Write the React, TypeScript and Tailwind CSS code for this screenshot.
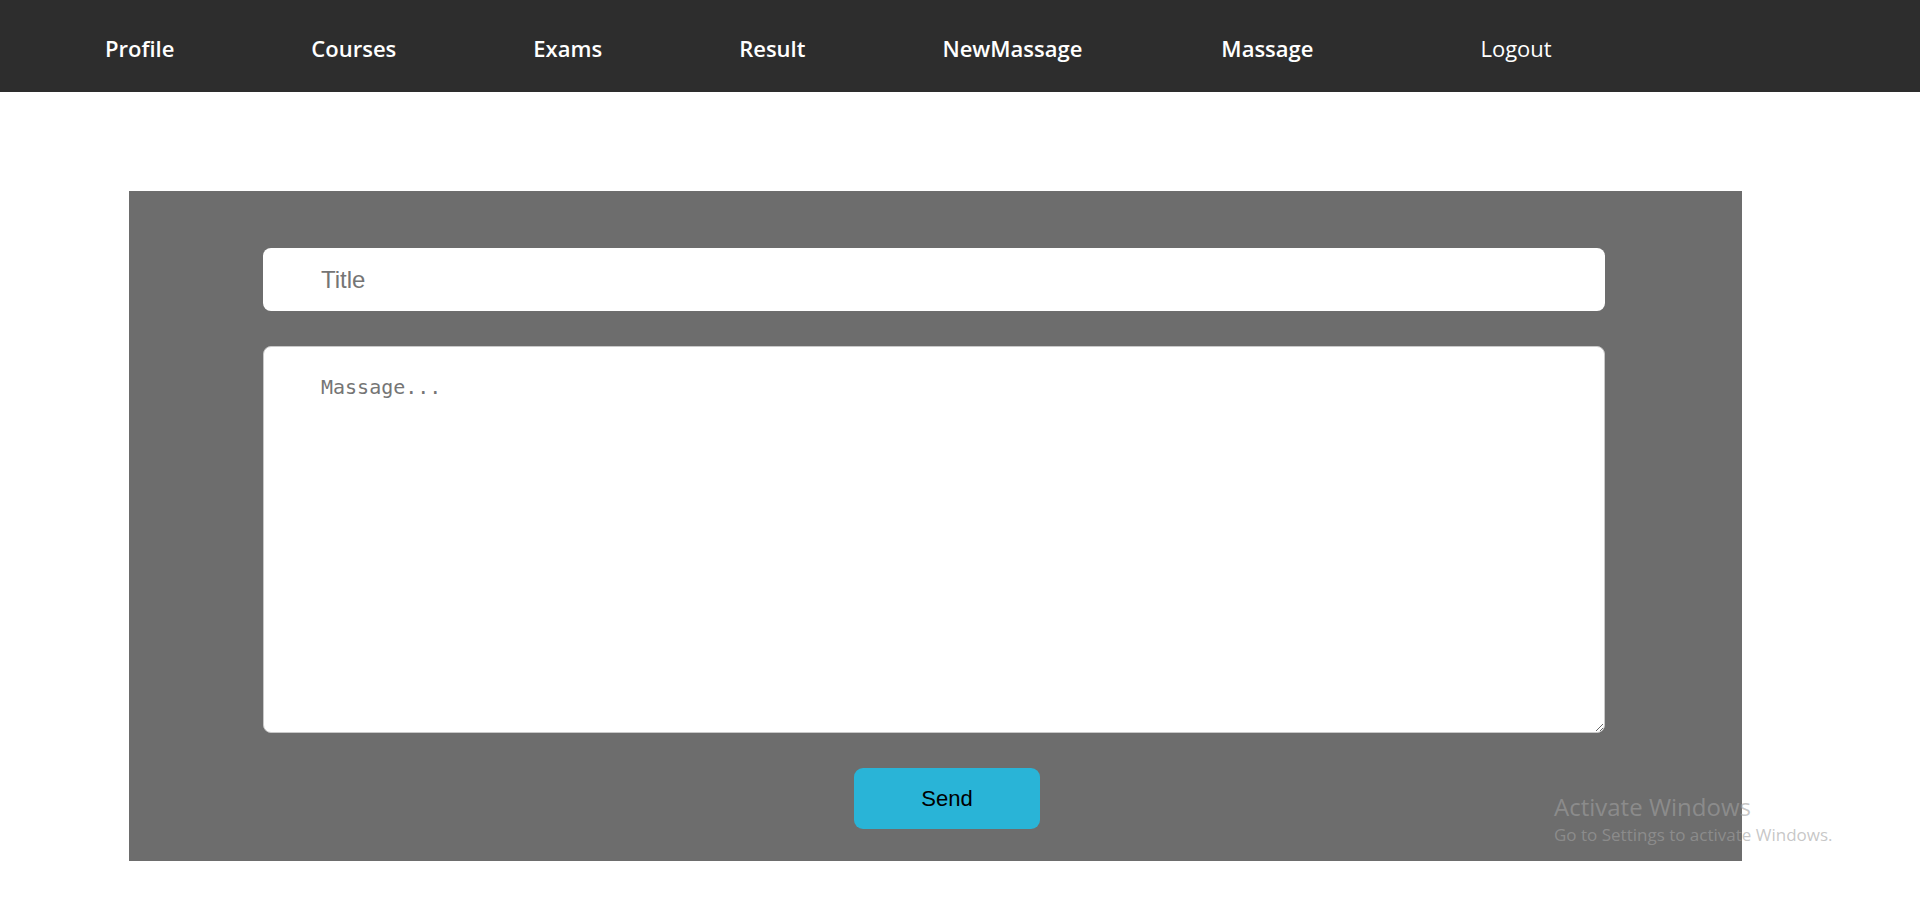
import React from 'react';

const navLinks = [
  { id: 'profile', label: 'Profile' },
  { id: 'courses', label: 'Courses' },
  { id: 'exams', label: 'Exams' },
  { id: 'result', label: 'Result' },
  { id: 'new-massage', label: 'NewMassage' },
  { id: 'massage', label: 'Massage' },
];

const Navbar = () => (
  <nav className="h-[92px] bg-[#2d2d2d] flex items-center pt-[5px] pl-[105px] font-['Open_Sans','Noto_Sans',sans-serif] text-[22px] text-white">
    <ul className="flex items-center gap-[137px]">
      {navLinks.map((link) => (
        <li key={link.id} className={link.id === 'massage' ? 'ml-[2px] font-semibold' : 'font-semibold'}>
          <a href="#">{link.label}</a>
        </li>
      ))}
      <li className="ml-[30px] font-normal">
        <button type="button">Logout</button>
      </li>
    </ul>
  </nav>
);

export default function App() {
  return (
    <div className="relative min-h-[900px] bg-white overflow-hidden">
      <Navbar />

      <main className="pt-[99px] pl-[129px] pr-[178px]">
        <form className="bg-[#6d6d6d] pt-[57px] pl-[134px] pr-[137px] pb-[32px] flex flex-col">
          <input
            type="text"
            placeholder="Title"
            className="h-[63px] w-full rounded-[8px] bg-white pl-[58px] text-[24px] text-black placeholder:text-[#757575] font-['Liberation_Sans',Arial,sans-serif] outline-none"
          />
          <textarea
            placeholder="Massage..."
            className="mt-[35px] h-[387px] w-full rounded-[8px] bg-white border border-[#c9c9c9] pl-[57px] pt-[27px] text-[20px] leading-[1.3] text-black placeholder:text-[#757575] font-['DejaVu_Sans_Mono',monospace] outline-none"
          />
          <button
            type="button"
            className="mt-[35px] ml-[591px] self-start h-[61px] w-[186px] rounded-[9px] bg-[#29b4d7] text-[22px] text-black font-['Liberation_Sans',Arial,sans-serif]"
          >
            Send
          </button>
        </form>
      </main>

      {/* windows watermark */}
      <div className="absolute left-[1554px] top-[791px] pointer-events-none font-['Open_Sans','Noto_Sans',sans-serif] text-[rgba(161,161,161,0.6)]">
        <div className="text-[24px] leading-[31px]">Activate Windows</div>
        <div className="text-[17px] leading-[23px] mt-[1px]">Go to Settings to activate Windows.</div>
      </div>
    </div>
  );
}
